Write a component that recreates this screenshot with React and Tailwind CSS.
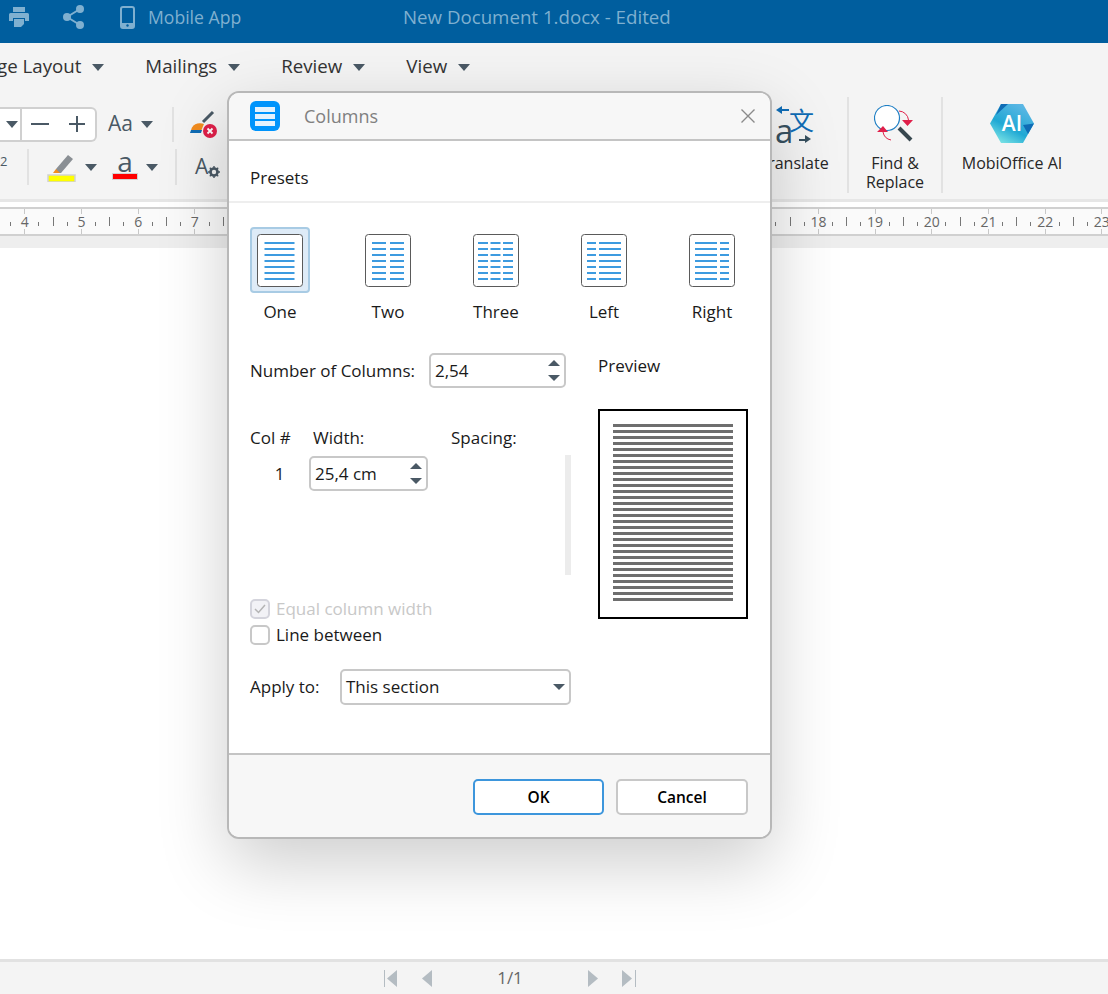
import React from 'react';

/*
    Columns dialog on top of the document editor
    everything under the dialog is normal flow, the dialog itself lies over it
*/

function Caret({className = ''}) {
    return (
        <svg width="12" height="7" viewBox="0 0 12 7" className={className}>
            <path d="M0 0h12L6 7z" fill="#4a5965" />
        </svg>
    );
}

function MenuItem({label, className = ''}) {
    return (
        <div className={`flex items-center gap-[11px] text-[18.7px] text-[#333] ${className}`}>
            <span>{label}</span>
            <Caret className="mt-[2px]" />
        </div>
    );
}

function Divider({className = ''}) {
    return <div className={`w-[2px] bg-[#e2e2e2] ${className}`} />;
}

function Spinner() {
    return (
        <div className="flex flex-col gap-[9px]">
            <svg width="12" height="6" viewBox="0 0 12 6"><path d="M6 0l6 6H0z" fill="#4a5965" /></svg>
            <svg width="12" height="6" viewBox="0 0 12 6"><path d="M0 0h12L6 6z" fill="#4a5965" /></svg>
        </div>
    );
}

function Ruler() {
    const numbers = [];
    for (let i = 3; i <= 23; i++) numbers.push(i);
    return (
        <div className="mt-[5px] h-[29px] border-y-2 border-[#d0d0d0] bg-[#fafafa] overflow-hidden">
            <div className="flex h-full ml-[-39px] w-max">
                {numbers.map((n) => (
                    <div key={n} className="flex w-[56.7px] h-full">
                        <div className="w-[14.2px] flex flex-col items-center justify-between">
                            <div className="w-px h-[5px] bg-[#c8c8c8]" />
                            {n > 3 && <span className="text-[14px] leading-none text-[#666]">{n}</span>}
                            <div className="w-px h-[5px] bg-[#c8c8c8]" />
                        </div>
                        <div className="w-[14.2px] flex items-center justify-center pt-[4px]"><div className="w-px h-[4px] bg-[#777]" /></div>
                        <div className="w-[14.2px] flex items-center justify-center"><div className="w-px h-[9px] bg-[#777]" /></div>
                        <div className="w-[14.2px] flex items-center justify-center pt-[4px]"><div className="w-px h-[4px] bg-[#777]" /></div>
                    </div>
                ))}
            </div>
        </div>
    );
}

function PresetIcon({cols}) {
    const rows = [9, 15, 21, 27, 33, 39, 45];
    return (
        <svg width="46" height="53" viewBox="0 0 46 53">
            <rect x="0.5" y="0.5" width="45" height="52" rx="3" fill="#fff" stroke="#5a5a5a" />
            {rows.map((y) => cols.map(([a, b]) => (
                <rect key={`${y}-${a}`} x={a} y={y - 1} width={b - a} height="2" fill="#3d9be0" />
            )))}
        </svg>
    );
}

const presets = [
    {label: 'One', cols: [[7.5, 37.5]]},
    {label: 'Two', cols: [[7, 21], [25, 39]]},
    {label: 'Three', cols: [[5, 15], [17.5, 27.5], [30, 40]]},
    {label: 'Left', cols: [[6, 15], [18, 40]]},
    {label: 'Right', cols: [[6, 28], [31, 40]]},
];

function TranslateIcon() {
    return (
        <div className="relative w-[38px] h-[40px]">
            <span className="absolute left-0 top-[10px] text-[33px] leading-[32px] font-medium text-[#37505f]">a</span>
            <span className="absolute left-[14px] top-[1px] text-[25px] leading-[27px] text-[#0f6cb5] font-['Noto_Sans_CJK_SC',sans-serif]">文</span>
            <svg width="38" height="40" viewBox="0 0 38 40" className="absolute left-0 top-0">
                <path d="M14 5H4" fill="none" stroke="#0f6cb5" strokeWidth="2" />
                <path d="M1 5l6-4v8z" fill="#0f6cb5" />
                <path d="M24 35h9" fill="none" stroke="#37505f" strokeWidth="2" />
                <path d="M36 34l-6-4v8z" fill="#37505f" />
            </svg>
        </div>
    );
}

function Dialog() {
    const previewLines = [];
    for (let i = 0; i < 30; i++) previewLines.push(i);

    return (
        <div className="absolute left-[227px] top-[91px] w-[545px] h-[748px] flex flex-col bg-white border-2 border-[#b8b8b8] rounded-[12px] overflow-hidden text-[17px] text-[#1a1a1a] shadow-[0_24px_70px_rgba(0,0,0,0.2)]">
            <div className="h-[48px] shrink-0 flex items-center pl-[21px] pr-[15px] bg-[#f7f7f7] border-b-2 border-[#c4c4c4]">
                <div className="w-[30px] h-[30px] rounded-[6px] bg-[#0094fb] flex flex-col items-center justify-center gap-[2px]">
                    <div className="w-[20px] h-[5px] bg-[#e4f2fd]" />
                    <div className="w-[20px] h-[5px] bg-[#e4f2fd]" />
                    <div className="w-[20px] h-[5px] bg-[#e4f2fd]" />
                </div>
                <span className="ml-[24px] text-[18px] text-[#808080]">Columns</span>
                <svg width="14" height="14" viewBox="0 0 14 14" className="ml-auto">
                    <path d="M.5.5l13 13M13.5.5l-13 13" stroke="#8a8a8a" strokeWidth="1.4" />
                </svg>
            </div>

            <div className="flex-1">
                <div className="h-[62px] pt-[13px] pl-[21px] flex items-center border-b-2 border-[#eeeeee]">Presets</div>

                <div className="flex ml-[-3px] mt-[24px]">
                    {presets.map((p, i) => (
                        <div key={p.label} className="w-[108px] flex flex-col items-center">
                            <div className={`w-[60px] h-[66px] flex items-center justify-center rounded-[4px] ${i == 0 ? 'bg-[#deebf7] border-2 border-[#a8cbe4]' : ''}`}>
                                <PresetIcon cols={p.cols} />
                            </div>
                            <span className="mt-[7px] leading-[24px]">{p.label}</span>
                        </div>
                    ))}
                </div>

                <div className="flex pl-[21px] mt-[29px] gap-[27px]">
                    <div className="w-[321px]">
                        <div className="flex items-center">
                            <span className="w-[179px]">Number of Columns:</span>
                            <div className="w-[137px] h-[35px] flex items-center justify-between pl-[4px] pr-[4px] border-2 border-[#c8c8c8] rounded-[5px]">
                                <span>2,54</span>
                                <Spinner />
                            </div>
                        </div>

                        <div className="flex mt-[38px] leading-[24px]">
                            <span className="w-[63px]">Col #</span>
                            <span className="w-[138px]">Width:</span>
                            <span>Spacing:</span>
                        </div>

                        <div className="flex items-start h-[120px] mt-[5px]">
                            <span className="w-[59px] h-[37px] flex items-center justify-center">1</span>
                            <div className="w-[119px] h-[35px] mt-[1px] flex items-center justify-between pl-[4px] pr-[4px] border-2 border-[#c8c8c8] rounded-[5px]">
                                <span>25,4 cm</span>
                                <Spinner />
                            </div>
                            <div className="ml-auto w-[6px] h-full bg-[#ececec]" />
                        </div>

                        <div className="mt-[21px] h-[26px] flex items-center gap-[6px] text-[#c8c8c8]">
                            <div className="w-[20px] h-[20px] rounded-[5px] border-2 border-[#d4d4dc] bg-[#f2f2f6] flex items-center justify-center">
                                <svg width="12" height="10" viewBox="0 0 12 10"><path d="M1 5l3.5 3.5L11 1" fill="none" stroke="#b4b4b4" strokeWidth="1.5" /></svg>
                            </div>
                            <span>Equal column width</span>
                        </div>
                        <div className="h-[26px] flex items-center gap-[6px]">
                            <div className="w-[20px] h-[20px] rounded-[5px] border-2 border-[#c8c8c8]" />
                            <span>Line between</span>
                        </div>

                        <div className="flex items-center mt-[21px]">
                            <span className="w-[90px]">Apply to:</span>
                            <div className="w-[231px] h-[36px] flex items-center justify-between pl-[4px] pr-[4px] border-2 border-[#c8c8c8] rounded-[5px]">
                                <span>This section</span>
                                <svg width="12" height="6" viewBox="0 0 12 6"><path d="M0 0h12L6 6z" fill="#4a5965" /></svg>
                            </div>
                        </div>
                    </div>

                    <div className="w-[150px] pt-[1px]">
                        <div className="leading-[24px]">Preview</div>
                        <div className="mt-[31px] w-[150px] h-[210px] border-2 border-black px-[13px] pt-[13px] flex flex-col gap-[3px]">
                            {previewLines.map((i) => (
                                <div key={i} className="h-[3px] shrink-0 bg-[#6e6e6e]" />
                            ))}
                        </div>
                    </div>
                </div>
            </div>

            <div className="h-[84px] shrink-0 flex justify-end gap-[12px] pt-[24px] pr-[22px] bg-[#f7f7f7] border-t-2 border-[#c4c4c4]">
                <button className="w-[131px] h-[36px] pt-[1px] bg-white border-2 border-[#3d96dc] rounded-[5px] font-semibold text-[15.5px] text-black">OK</button>
                <button className="w-[132px] h-[36px] pt-[1px] bg-white border-2 border-[#c8c8c8] rounded-[5px] font-semibold text-[15.5px] text-black">Cancel</button>
            </div>
        </div>
    );
}

export default function App() {
    return (
        <div className="relative h-[994px] flex flex-col overflow-hidden bg-white font-['Open_Sans',sans-serif]">
            {/* title bar */}
            <div className="h-[43px] shrink-0 flex items-center pb-[9px] bg-[#005e9e] text-[#7fb0d0]">
                <svg width="20" height="20" viewBox="0 0 20 20" className="ml-[9px]" fill="#7fb0d0">
                    <path d="M4 0h12v5H4zM1.500 6h17A1.500 1.500 0 0 1 20 7.500V14h-4v-3H4v3H0V7.500A1.500 1.500 0 0 1 1.500 6z" />
                    <path d="M5 12h10v5l-3 3H5z" />
                </svg>
                <svg width="22" height="24" viewBox="0 0 22 24" className="ml-[34px]" fill="#7fb0d0">
                    <circle cx="17" cy="4" r="4" /><circle cx="4" cy="12" r="4" /><circle cx="17" cy="20" r="4" />
                    <path d="M4 12L17 4M4 12l13 8" stroke="#7fb0d0" strokeWidth="2" />
                </svg>
                <svg width="15" height="23" viewBox="0 0 15 23" className="ml-[35px]">
                    <rect x="1" y="1" width="13" height="21" rx="2" fill="none" stroke="#7fb0d0" strokeWidth="2" />
                    <rect x="1" y="17" width="13" height="5" fill="#7fb0d0" />
                    <circle cx="7.500" cy="19.500" r="1.200" fill="#005e9e" />
                </svg>
                <span className="ml-[13px] text-[17.600px] w-[255px]">Mobile App</span>
                <span className="text-[18.700px]">New Document 1.docx - Edited</span>
            </div>

            {/* menu tabs */}
            <div className="h-[47px] shrink-0 flex items-center bg-[#f4f4f4] pl-[0px]">
                <MenuItem label="ge Layout" className="ml-[-3px]" />
                <MenuItem label="Mailings" className="ml-[41px]" />
                <MenuItem label="Review" className="ml-[41px]" />
                <MenuItem label="View" className="ml-[41px]" />
            </div>

            {/* ribbon */}
            <div className="h-[112px] shrink-0 flex justify-between bg-[#f4f4f4] border-b-[3px] border-[#e6e6e6]">
                <div className="flex flex-col pt-[16px] gap-[7px]">
                    <div className="flex items-center h-[36px]">
                        <div className="w-[97px] h-[35px] flex items-center bg-white border-2 border-[#d0d0d0] rounded-r-[6px] border-l-0">
                            <Caret className="ml-[6px]" />
                            <div className="w-[2px] h-full bg-[#d0d0d0] ml-[2px]" />
                            <svg width="18" height="2" viewBox="0 0 18 2" className="ml-[9px]"><path d="M0 1h18" stroke="#4a5965" strokeWidth="2" /></svg>
                            <svg width="16" height="16" viewBox="0 0 16 16" className="ml-[20px]"><path d="M0 8h16M8 0v16" stroke="#4a5965" strokeWidth="2" /></svg>
                        </div>
                        <span className="ml-[11px] text-[21px] text-[#4a5965]">Aa</span>
                        <Caret className="ml-[8px]" />
                        <Divider className="ml-[19px] h-[35px]" />
                        <svg width="28" height="28" viewBox="0 0 28 28" className="ml-[16px]">
                            <path d="M13 12L23 2" stroke="#4a5965" strokeWidth="3" />
                            <path d="M1 21a9 8 0 0 1 13-7l-3 7z" fill="#f28c1e" />
                            <path d="M0 23l1-3h11l-1 3z" fill="#0f6cb5" />
                            <circle cx="20" cy="21" r="7" fill="#e0204a" />
                            <path d="M17.500 18.500l5 5M22.500 18.500l-5 5" stroke="#fff" strokeWidth="1.800" />
                        </svg>
                    </div>
                    <div className="flex items-center h-[36px]">
                        <span className="text-[13px] text-[#4a5965] w-[27px] mb-[10px]">2</span>
                        <Divider className="h-[36px]" />
                        <svg width="30" height="30" viewBox="0 0 30 30" className="ml-[18px]">
                            <path d="M9 17L21 3l5 4-12 14-5 0z" fill="#8a8f94" />
                            <path d="M6 21l3-4 4 4z" fill="#f28c1e" />
                            <rect x="1" y="23" width="27" height="7" fill="#ffff00" stroke="#d2d2d2" strokeWidth="1.500" />
                        </svg>
                        <Caret className="ml-[8px]" />
                        <div className="ml-[15px] w-[26px] flex flex-col items-center">
                            <span className="text-[28px] leading-[24px] text-[#4a5965] mt-[-6px]">a</span>
                            <div className="w-[26px] h-[7px] bg-[#ff0000] border border-[#d2d2d2]" />
                        </div>
                        <Caret className="ml-[8px]" />
                        <Divider className="ml-[17px] h-[36px]" />
                        <span className="ml-[18px] text-[21px] text-[#4a5965]">A</span>
                        <svg width="12" height="12" viewBox="0 0 12 12" className="mt-[10px]">
                            <circle cx="6" cy="6" r="3.500" fill="none" stroke="#4a5965" strokeWidth="2.600" />
                            <path d="M6 0v12M0 6h12M1.800 1.800l8.400 8.400M10.200 1.800l-8.400 8.400" stroke="#4a5965" strokeWidth="1.400" strokeDasharray="2 8" />
                        </svg>
                    </div>
                </div>

                <div className="flex pt-[7px] pb-[6px] pr-[27px] text-[16px] text-[#262626]">
                    <div className="flex flex-col items-center w-[64px] pt-[8px]">
                        <TranslateIcon />
                        <span className="mt-[7px] leading-[22px]">Translate</span>
                    </div>
                    <Divider className="ml-[21px]" />
                    <div className="flex flex-col items-center w-[92px] pt-[8px]">
                        <svg width="42" height="38" viewBox="0 0 42 38">
                            <circle cx="13" cy="13" r="12.500" fill="#fff" stroke="#1f7fc4" strokeWidth="1.200" />
                            <path d="M25 23l12 12" stroke="#37474f" strokeWidth="4" />
                            <path d="M25 6a10 10 0 0 1 9.500 9M17 35a10 10 0 0 1-8-8" fill="none" stroke="#e0204a" strokeWidth="1" />
                            <path d="M28 15h11l-5.500 6zM3 27l6-6 5 6z" fill="#e0204a" />
                        </svg>
                        <span className="mt-[11px] leading-[19px] text-center">Find &<br />Replace</span>
                    </div>
                    <Divider />
                    <div className="flex flex-col items-center w-[138px] pt-[7px]">
                        <svg width="44" height="39" viewBox="0 0 44 39">
                            <defs>
                                <linearGradient id="aiFill" x1="0.2" y1="1" x2="0.8" y2="0">
                                    <stop offset="0" stopColor="#7fe6e6" />
                                    <stop offset="0.4" stopColor="#1fa8d4" />
                                    <stop offset="1" stopColor="#62b8e6" />
                                </linearGradient>
                            </defs>
                            <path d="M11 0h22l11 19.500L33 39H11L0 19.500z" fill="url(#aiFill)" />
                            <path d="M11 0h7L6 11zM44 19.500L38 30l-5-9z" fill="#0f6cb5" />
                            <text x="22" y="27" textAnchor="middle" fontSize="21" fontWeight="600" fill="#fff" fontFamily="Open Sans, sans-serif">AI</text>
                        </svg>
                        <span className="mt-[9px] leading-[22px]">MobiOffice AI</span>
                    </div>
                </div>
            </div>

            <Ruler />

            <div className="h-[12px] shrink-0 bg-[#eeeeee]" />

            <div className="flex-1 bg-white" />

            {/* page navigation */}
            <div className="h-[35px] shrink-0 flex items-center bg-[#f4f4f4] border-t-[3px] border-[#e2e2e2] pl-[384px] text-[17px] text-[#666]">
                <svg width="14" height="17" viewBox="0 0 14 17" fill="#b4bcc2">
                    <path d="M0 0h1v17H0zM13 0v17L3 8.500z" />
                </svg>
                <svg width="10" height="17" viewBox="0 0 10 17" fill="#b4bcc2" className="ml-[24px]">
                    <path d="M10 0v17L0 8.500z" />
                </svg>
                <span className="w-[156px] text-center">1/1</span>
                <svg width="10" height="17" viewBox="0 0 10 17" fill="#b4bcc2">
                    <path d="M0 0v17l10-8.500z" />
                </svg>
                <svg width="14" height="17" viewBox="0 0 14 17" fill="#b4bcc2" className="ml-[24px]">
                    <path d="M0 0v17l10-8.500zM13 0h1v17h-1z" />
                </svg>
            </div>

            <Dialog />
        </div>
    );
}
